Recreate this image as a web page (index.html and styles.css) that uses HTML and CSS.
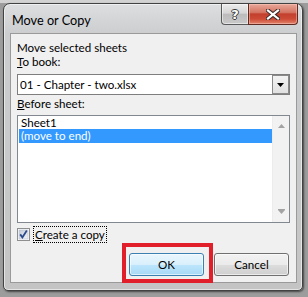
FILE: index.html
```html
<!DOCTYPE html>
<html>
<head>
<meta charset="utf-8">
<title>Move or Copy</title>
<link rel="stylesheet" href="styles.css">
</head>
<body>
<div class="window">
  <div class="titlebar">
    <span class="title">Move or Copy</span>
    <div class="caption">
      <div class="cap help"><span class="help-glyph">?</span></div>
      <div class="cap close">
        <svg width="14" height="11" viewBox="0 0 14 11">
          <path d="M2 1.5 L12 9.5 M12 1.5 L2 9.5" stroke="#3b2a28" stroke-width="4.2" stroke-linecap="square" fill="none"/>
          <path d="M2 1.5 L12 9.5 M12 1.5 L2 9.5" stroke="#ffffff" stroke-width="2.2" stroke-linecap="square" fill="none"/>
        </svg>
      </div>
    </div>
  </div>
  <div class="panel">
    <div class="label">Move selected sheets</div>
    <div class="label"><u>T</u>o book:</div>
    <div class="combo">
      <span class="combo-text">01 - Chapter - two.xlsx</span>
      <div class="combo-btn">
        <svg width="7" height="4" viewBox="0 0 7 4"><path d="M0 0 H7 L3.5 4 Z" fill="#000"/></svg>
      </div>
    </div>
    <div class="label before"><u>B</u>efore sheet:</div>
    <div class="listbox">
      <div class="items">
        <div class="item">Sheet1</div>
        <div class="item selected">(move to end)</div>
      </div>
      <div class="scrollbar">
        <svg width="7" height="4" viewBox="0 0 7 4"><path d="M3.5 0 L7 4 H0 Z" fill="#a3a3a3"/></svg>
        <svg width="7" height="5" viewBox="0 0 7 5"><path d="M0 0 H7 V1 H0 Z M0 1 H7 L3.5 5 Z" fill="#a3a3a3"/></svg>
      </div>
    </div>
    <div class="check-row">
      <span class="checkbox">
        <svg width="13" height="13" viewBox="0 0 13 13">
          <defs>
            <linearGradient id="cb" x1="0" y1="0" x2="1" y2="1">
              <stop offset="0" stop-color="#c3cbd8"/>
              <stop offset="1" stop-color="#f2f4f8"/>
            </linearGradient>
          </defs>
          <rect x="0.5" y="0.5" width="12" height="12" fill="#fff" stroke="#8e8f8f"/>
          <rect x="2" y="2" width="9" height="9" fill="url(#cb)" stroke="#b4bccb" stroke-width="0.6"/>
          <path d="M3.2 6.4 L5.4 9.4 L9.8 2.6" stroke="#2c4a8a" stroke-width="1.8" fill="none"/>
        </svg>
      </span>
      <span class="check-label"><u>C</u>reate a copy</span>
    </div>
    <div class="btn-row">
      <div class="ok-wrap">
        <div class="btn ok">OK</div>
        <div class="highlight"></div>
      </div>
      <div class="btn cancel">Cancel</div>
    </div>
  </div>
</div>
</body>
</html>
```

FILE: styles.css
```css
* { box-sizing: border-box; }
html, body { margin: 0; padding: 0; }
body {
  width: 308px;
  height: 297px;
  overflow: hidden;
  background: linear-gradient(#d2d2d2 0, #d2d2d2 3px, #9c9c9c 3px);
  font-family: Lato, "Liberation Sans", sans-serif;
  font-size: 11.6px;
  color: #000;
  padding: 3px 0 0 3px;
}
.window {
  width: 300px;
  height: 288px;
  border: 1px solid #424242;
  border-radius: 7px 7px 5px 5px;
  background: linear-gradient(#dcdee0, #cbcdcf 30px, #c4c4c4);
  box-shadow: inset 0 0 0 1px rgba(255,255,255,0.55), 1px 1px 2px rgba(0,0,0,0.55);
  display: flex;
  flex-direction: column;
}
.titlebar {
  height: 29px;
  display: flex;
  align-items: flex-start;
  padding-left: 8px;
}
.title {
  font-size: 12.7px;
  line-height: 15px;
  margin-top: 9px;
}
.caption {
  margin-left: auto;
  margin-right: 4px;
  display: flex;
}
.cap {
  height: 21px;
  display: flex;
  align-items: center;
  justify-content: center;
  border: 1px solid #5a5a5a;
  border-top: none;
}
.help {
  width: 27px;
  border-right: none;
  border-radius: 0 0 0 4px;
  background: linear-gradient(#ececec, #d6d6d6 45%, #bcbcbc 52%, #c9c9c9);
  box-shadow: inset 0 0 0 1px rgba(255,255,255,0.5);
}
.help-glyph {
  font-family: "DejaVu Sans", sans-serif;
  font-weight: bold;
  font-size: 13px;
  line-height: 13px;
  color: #fff;
  text-shadow: 1px 0 0 #3a3a3a, -1px 0 0 #3a3a3a, 0 1px 0 #3a3a3a, 0 -1px 0 #3a3a3a;
}
.close {
  width: 50px;
  border-color: #5e2a22;
  border-radius: 0 0 4px 0;
  background: linear-gradient(#e8a899, #d47564 42%, #c1402d 50%, #cd4b36 75%, #e2846c);
  box-shadow: inset 0 0 0 1px rgba(255,210,200,0.45);
}
.panel {
  margin: 0 5px 0 6px;
  height: 250px;
  border: 1px solid #9a9a9a;
  background: #f0f0f0;
  padding: 7px 6px 0 6px;
}
.label {
  height: 14px;
  line-height: 14px;
  white-space: nowrap;
}
.combo {
  margin-top: 5px;
  height: 21px;
  border: 1px solid #7e7e7e;
  background: #fff;
  display: flex;
  align-items: center;
}
.combo-text {
  padding-left: 2px;
  line-height: 14px;
  white-space: nowrap;
}
.combo-btn {
  margin-left: auto;
  width: 17px;
  height: 19px;
  border: 1px solid #8a8a8a;
  background: linear-gradient(#f3f3f3, #e1e1e1);
  display: flex;
  align-items: center;
  justify-content: center;
}
.before { margin-top: 2px; }
.listbox {
  margin-top: 4px;
  height: 108px;
  border: 1px solid #828790;
  background: #fff;
  display: flex;
}
.items {
  flex: 1;
  margin-left: 1px;
}
.item {
  height: 14px;
  line-height: 14px;
  padding-left: 2px;
  white-space: nowrap;
}
.item:first-child {
  height: 13px;
  line-height: 14px;
}
.selected {
  background: #3399ff;
  color: #fff;
}
.scrollbar {
  width: 17px;
  background: #f2f2f2;
  border-left: 1px solid #ececec;
  display: flex;
  flex-direction: column;
  align-items: center;
  justify-content: space-between;
  padding: 8px 0 8px 0;
}
.check-row {
  margin-top: 3px;
  height: 17px;
  display: flex;
  align-items: center;
}
.checkbox {
  width: 13px;
  height: 13px;
  display: flex;
}
.check-label {
  margin-left: 3px;
  height: 17px;
  line-height: 15px;
  padding: 0 1px;
  border: 1px dotted #000;
  white-space: nowrap;
}
.btn-row {
  margin-top: 10px;
  display: flex;
  justify-content: flex-end;
  gap: 10px;
  padding-right: 1px;
}
.ok-wrap { position: relative; }
.btn {
  width: 75px;
  height: 23px;
  border-radius: 3px;
  display: flex;
  align-items: center;
  justify-content: center;
  line-height: 14px;
}
.ok {
  border: 1px solid #3c7fb1;
  background: linear-gradient(#eaf6fd, #d9f0fc 50%, #bee6fd 50%, #a7d9f5);
  box-shadow: inset 0 0 0 1px rgba(255,255,255,0.6);
}
.cancel {
  border: 1px solid #707070;
  background: linear-gradient(#f2f2f2, #ebebeb 50%, #dddddd 50%, #cfcfcf);
  box-shadow: inset 0 0 0 1px rgba(255,255,255,0.6);
}
.highlight {
  position: absolute;
  top: -10px;
  left: -7px;
  right: -9px;
  bottom: -7px;
  border: 4px solid #e11f2a;
}
```
